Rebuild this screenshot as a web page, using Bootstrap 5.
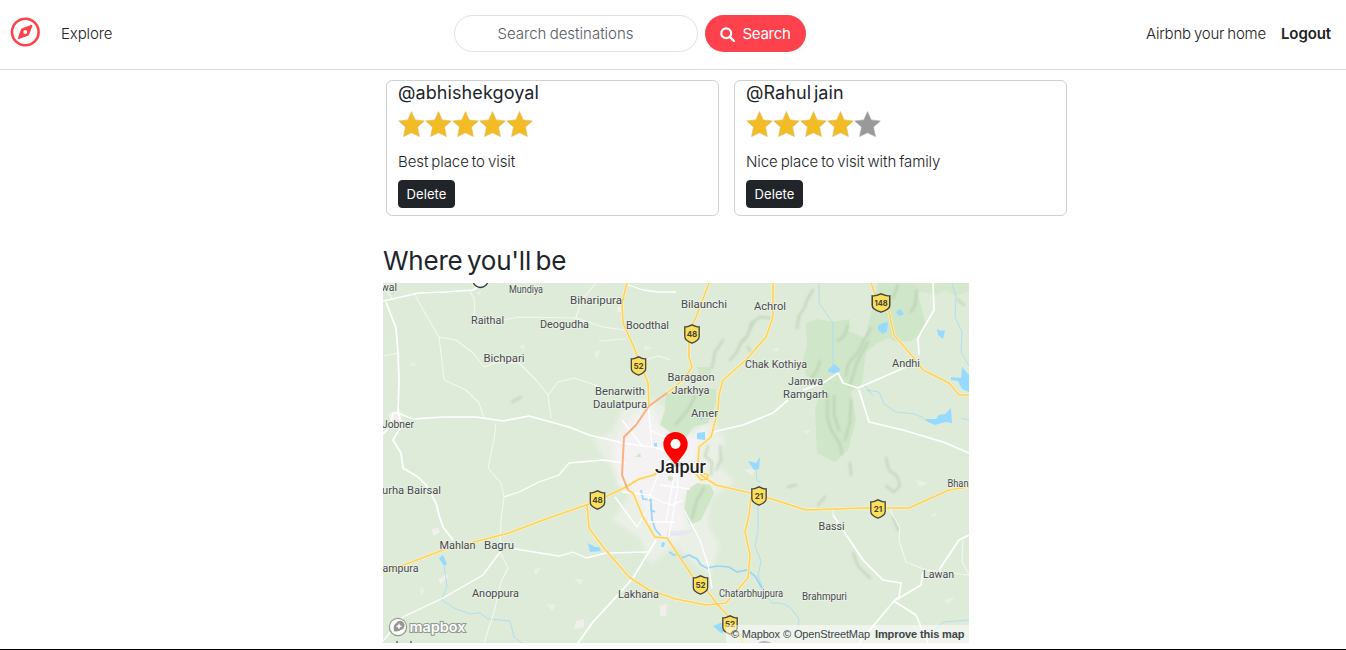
<!DOCTYPE html>
<html lang="en">
<head>
<meta charset="utf-8">
<meta name="viewport" content="width=device-width, initial-scale=1">
<title>Explore</title>
<link href="https://cdn.jsdelivr.net/npm/bootstrap@5.3.0/dist/css/bootstrap.min.css" rel="stylesheet">
<style>
body{font-family:Inter,"Open Sans",sans-serif;font-size:15px;color:#212529;overflow:hidden}
.top-bar{height:70px;border-bottom:1px solid #dcdcdc;padding:0 15px 2px 10px}
.top-bar .nav-link{color:#222;font-weight:300;padding-top:2px}
.side{flex:1 1 0}
.compass{margin-top:-3px}
.explore{margin-left:21px;letter-spacing:-.1px}
.search-field{width:244px;height:37px;border-radius:25px;padding:0 43px;font-size:15px;font-weight:300;letter-spacing:0;word-spacing:-1px}
.search-field::placeholder{color:#555b61}
.search-btn{width:101px;height:37px;border-radius:25px;background:#fe424d;color:#fff;font-size:15px;letter-spacing:-.3px;padding:1px 0 0;margin-left:7px}
.search-wrap{margin-right:82px}
.home-link{letter-spacing:-.2px;word-spacing:-1px}
.top-bar .logout{margin-left:15px;font-weight:600;letter-spacing:-.1px}
.content{width:684px;margin-left:383px}
.reviews{padding:10px 0 0 3px;gap:15px}
.review{width:333px;height:136px;border:1px solid #d0d1d2;border-radius:6px;padding:0 11px}
.review h5{font-size:18px;font-weight:400;line-height:22px;margin:1px 0 7px;letter-spacing:.1px;word-spacing:-2.5px}
.review .stars{height:27px;margin-bottom:14px}
.review p{font-weight:300;line-height:20px;margin:0 0 8px;letter-spacing:-.1px;word-spacing:-1px}
.del{width:57px;height:28px;padding:1px 0 0;font-size:13px;letter-spacing:.1px;border-radius:4px}
.where{font-size:26px;font-weight:400;line-height:32px;margin:29px 0 6px;letter-spacing:-.25px;word-spacing:-2.5px}
.map-box{width:586px;height:360px}
.map-box svg{display:block}
.map-label{font-family:Roboto,sans-serif;font-size:11.8px;fill:#46484c;stroke:#eef4ea;stroke-width:1.5px;paint-order:stroke;text-anchor:middle;font-weight:400}
.map-label .hamlet{font-size:10.5px}
.bottom-line{border-top:1px solid #000;margin-top:6px}
</style>
</head>
<body>
<nav class="top-bar d-flex align-items-center bg-white">
  <div class="side d-flex align-items-center">
    <svg class="compass" width="30" height="30" viewBox="0 0 30 30"><circle cx="15.300" cy="15" r="13.3" fill="none" stroke="#fe424d" stroke-width="2.6"/><path fill="#fe424d" fill-rule="evenodd" d="M20.900 8 12.300 11.200Q11.200 11.600 10.800 12.700L8 20.800Q7.800 22.300 9.300 22L17.800 18.800Q18.800 18.400 19.200 17.300L22.300 9.200Q22.600 7.600 20.900 8ZM15.300 13a2 2 0 1 1 0 4 2 2 0 0 1 0-4Z"/></svg>
    <a class="nav-link explore" href="#">Explore</a>
  </div>
  <form class="search-wrap d-flex">
    <input class="form-control search-field" placeholder="Search destinations" type="search">
    <button class="btn search-btn d-flex align-items-center justify-content-center" type="button"><svg width="15" height="15" viewBox="0 0 15 15" class="me-2"><circle cx="6.2" cy="6.2" r="4.9" fill="none" stroke="#fff" stroke-width="2.2"/><path d="M9.8 9.8 14 14" stroke="#fff" stroke-width="2.4" stroke-linecap="round"/></svg>Search</button>
  </form>
  <div class="side d-flex justify-content-end">
    <a class="nav-link home-link" href="#">Airbnb your home</a>
    <a class="nav-link logout" href="#">Logout</a>
  </div>
</nav>

<svg width="0" height="0" class="position-absolute"><defs>
  <path id="star" d="M13.5.6 17.2 8.9 26.3 9.9 19.5 16 21.4 25.500 13.5 21.8 5.6 25.500 7.5 16 .7 9.9 9.8 8.9Z"/>
  <g id="shield"><path d="M-8.3-7.6Q-6-7-3.5-8.2L0-10 3.5-8.2Q6-7 8.3-7.6V2Q8.3 7 0 10-8.3 7-8.3 2Z" fill="#fff3bd"/><path d="M-7.2-7.2Q-5-6.8-3-7.8L0-9.2 3-7.8Q5-6.8 7.2-7.2V2.500Q7.2 6.500 0 9.200-7.2 6.500-7.2 2.500Z" fill="#fbdf59" stroke="#3f4248" stroke-width="1.3"/></g>
</defs></svg>

<main class="content">
  <div class="reviews d-flex">
    <div class="review">
      <h5>@abhishekgoyal</h5>
      <svg class="stars d-block" width="136" height="27" fill="#f4bc24" stroke="#d9b865" stroke-width=".6"><use href="#star"/><use href="#star" x="27"/><use href="#star" x="54"/><use href="#star" x="81"/><use href="#star" x="108"/></svg>
      <p>Best place to visit</p>
      <button class="btn btn-dark del">Delete</button>
    </div>
    <div class="review">
      <h5>@Rahul jain</h5>
      <svg class="stars d-block" width="136" height="27" fill="#f4bc24" stroke="#d9b865" stroke-width=".6"><use href="#star"/><use href="#star" x="27"/><use href="#star" x="54"/><use href="#star" x="81"/><use href="#star" x="108" fill="#999" stroke="#aaa"/></svg>
      <p>Nice place to visit with family</p>
      <button class="btn btn-dark del">Delete</button>
    </div>
  </div>
  <h3 class="where">Where you'll be</h3>
  <div class="map-box">
  <svg width="586" height="360" viewBox="383 283 586 360">
    <defs><filter id="soft" x="-20%" y="-20%" width="140%" height="140%"><feGaussianBlur stdDeviation="2.5"/></filter><filter id="ridge"><feGaussianBlur stdDeviation=".8"/></filter></defs>
    <rect x="383" y="283" width="586" height="360" fill="#deebd8"/>
    <!-- built-up area -->
    <path filter="url(#soft)" fill="#eaf0e6" d="M624 405 650 397 665 408 668 430 692 432 712 420 725 440 718 465 735 482 710 500 708 525 720 545 710 575 690 560 676 545 650 565 640 538 612 520 630 495 610 465 592 440 612 432Z"/>
    <path filter="url(#soft)" fill="#f4f2f3" d="M632 418 650 404 660 426 680 438 694 436 704 425 708 434 697 450 695 467 706 484 690 490 682 502 688 525 676 540 658 540 645 515 638 498 618 484 612 448Z"/>
    <!-- woodland -->
    <g fill="#cfe6c8">
      <path d="M806 323 817 319 833 322 850 319 848 331 865 338 872 310 878 283 915 283 921 306 925 322 924 333 910 341 897 342 888 338 876 344 866 352 862 383 851 392 856 420 848 450 835 462 817 453 815 409 824 382 806 376 803 360 807 345Z"/>
      <path d="M915 283h54v8l-13 5-12-6-6 5-22-4Z" opacity=".6"/><path d="M697 367h14v10h-11Z"/>
      <path d="M666 393 685 388 716 389 716 403 708 423 693 427 684 441 675 437 665 428 660 425 665 410Z"/>
      <path d="M687 490 697 483 710 485 714 493 706 510 701 520 690 525 684 512Z"/><path d="M635 457l5-4 1 4ZM668 476l6 1-2 4-4-1Z"/>
    </g>
    <path d="M667 531l28-1-10 5-18 1Z" fill="#e6e7f0"/>
    <g fill="#f1efec"><path d="M388 414 400 410 403 424 393 427ZM431 530l7-3 2 5-6 4ZM438 580l8-6 3 2-8 8ZM576 621l8-2 0 8-10 2ZM660 606l7-2-1 12-6 0ZM617 308l4-3 1 7-5 0ZM477 293l4-2-1 4Z"/></g>
    <g fill="#e9f0e4"><path d="M594 352l7-2-5 10ZM574 578l10 2-4 5ZM547 604l9 1-4 6ZM533 570l8-3-5 8ZM412 362l6 3-8 1ZM803 431l8-1-3 4ZM420 587l5 3-4 6ZM744 470l12-2-4 8ZM915 480l13 3-8 4ZM645 345l8 4-9 1ZM930 515l8-3-4 5ZM945 600l10-3-8 8ZM772 350l6-3 1 5ZM519 347l5-3 1 6Z"/></g>
    <!-- hill relief -->
    <g fill="none" stroke="#b4c5a9" opacity=".5" stroke-width="2.6" stroke-linecap="round" filter="url(#ridge)">
      <path d="M813 290 807 300 805 307 799 316 797 328M770 318 760 317 751 323 748 335 741 342 737 352 730 360M754 322 744 341M723 340 715 352 712 368M820 361 817 370 812 378M871 328 864 340 858 352 848 364 846 376M868 342 857 362 850 385M848 325 845 335 838 341M898 285 893 298M917 290 915 305 911 312M958 300l6 5M828 395 827 415 831 430 840 444 842 454M834 396 834 415 839 430M851 400 850 422 845 440M886 458l3 12 8 6 3 10-6 6-8-6M850 463 851 475M853 553 858 566 870 578M893 517 898 530M708 446 705 456 712 462 711 475M720 446 721 460 716 470M704 488 697 500 692 518M695 396 688 410 676 424M512 402l9-5M788 487l8-2M825 497l-7 8M748 347l2 4"/>
    </g>
    <!-- water -->
    <g fill="#96daff">
      <path d="M878 326l5-3 5-1-1 9-4 3-5-4ZM896 312l4-3 4 5-5 2ZM937 329l4 2 4-1-2 9-5-4ZM828 370l6-6 6 5-2 5-10-2ZM951 377l10 1 1-11 7 8v17l-7-3-4-8-7-1ZM924 419l12 0 3-4 6-1 6-6 1 15-7-1-10 3-7-3ZM748 461l8 2 4-6-1 12-5 1ZM697 433l8-1 0 8-8-1ZM439 558l4-3 4 9-3 2ZM588 543l7 4 4 0 2 4-11 1ZM713 626l12-5 4 10-8 2ZM654 443h3v5h-3ZM662 542l3 1-1 4h-3ZM700 417l3 0-2 4Z"/>
    </g>
    <g fill="none" stroke="#abdcf0" stroke-width=".9">
      <path d="M819 283v20l7 10 7 10v45M867 390l12 2 5 12 12 8 18 2 10 4M952 283l4 14-1 20 7 15-1 20 8 14M756 470l1 11 4 1M758 490v42l-3 14 6 15-3 15 8 20 6 7 9 0 9 4 9 12-2 18M444 566l3 20-5 14 12 8 16 6 10-1 8 6 22 2 4 16 8 6M961 418l8 2M865 386l8 10M397 283l-4 12M935 630l8-8 26-2"/>
    </g>
    <path fill="none" stroke="#96d6f8" stroke-width="1.700" d="M641 490l2 9 8 1 0 10 4 2M651 503l1 16 3 10 6 7M669 552l5 3 4-1 4 4 7-3 8 4 4 6 6 3 10-2 12 1 8 5 10-2 8 6 7 12"/>
    <!-- minor roads -->
    <g fill="none" stroke="#f5f7f1" stroke-width="1.1" stroke-linejoin="round">
      <path d="M414 293 426 315 439 337 456 340 473 353 484 367 499 362 519 363 536 380 548 395 551 418M439 337 441 353 444 380 466 390 479 403 484 418M470 291l4 8 1 8-2 12M504 320 519 317 576 318 603 327 624 330M599 341 626 339M576 318l5-17 15-18M548 395l10-13 16-4 24 8M496 423 494 440 488 468 501 483 504 497 501 520 500 552 508 568 501 582 494 612 484 643M383 356l15-3M833 508v7M899 540 906 562 926 570 969 575M890 510l10 18-1 12M963 540l-1 22 7 12M383 285l10 15M645 360l14-4 11 4"/>
    </g>
    <g fill="none" stroke="#fff" stroke-width="1.3" stroke-linejoin="round">
      <path d="M504 497 519 492 539 482 559 475 569 463 603 460 626 463M500 552 483 575 443 598 403 617 383 641M509 548 559 556 573 552 586 558 606 553 649 552M628 285 643 290 659 292 676 292M648 405 650 425 652 447M650 430 674 441M622 420l20 26M650 445l18 8 8 15 2 18-9 50M622 492 650 495 662 502 672 505 683 500M660 485l30 4M615 497l22 30 8-14M684 510 700 540 708 565 712 588M647 522l28 0M685 448l-10 22-9 52M648 500l10-25"/>
    </g>
    <g fill="none" stroke="#fff" stroke-width="1.7" stroke-linejoin="round">
      <path d="M383 301 419 293 446 292 473 290 480 286M386 302 396 328 398 353 399 380 398 413M383 434 390 427 393 413 398 413 402 425 393 440 401 453 403 468 418 477 426 485 436 503 439 515 443 527 453 540M398 413 413 419 443 417 476 417 503 421 529 416 569 427 589 435 623 443 659 448 669 455M656 540 633 578 616 597 593 622 578 643M803 390 823 383 838 373 843 383 858 388 906 367M933 283 934 310 918 338 919 355M713 432 743 425 773 413 788 400M859 390 869 422 903 430 943 442 969 453M833 515 863 560 883 580 901 583 899 597 894 601 859 643M894 601 921 585 923 572M894 601 916 615 928 643M939 570 959 540 969 535"/>
    </g>
    <!-- highways -->
    <g fill="none" stroke="#fff3ba" stroke-width="3" stroke-linejoin="round">
      <path id="hwp" d="M627 283 622 303 623 323 633 345 639 360 648 383 649 405M628 490 633 493 643 517 655 537 667 538 693 577 708 592 718 605 729 617 743 643M667 393 683 380 692 367 689 357 689 333 696 317 709 283M773 283 773 317 766 337 746 360 723 380 719 395 718 410 711 437 699 447 698 463 701 475 716 485 759 495 806 510 863 508 909 508 949 490 969 487M696 474l5 6 6-1 1-4-8-3M871 283 876 297 889 312 894 335 913 357 923 370 949 383 959 395 969 395M383 573 443 550 509 533 546 519 586 505 603 498 626 487 639 479 654 475 663 468M587 505 589 528 603 547 629 577 649 590 676 599 706 605 726 603 748 578 750 555 745 532 749 515 751 497"/>
    </g>
    <use href="#hwp" fill="none" stroke="#fad165" stroke-width="1.6" stroke-linejoin="round"/>
    <path d="M667 393 649 406 636 425 624 437 622 475 628 490" fill="none" stroke="#fcb07f" stroke-width="2" stroke-linejoin="round"/>
    <!-- road shields -->
    <circle cx="480.500" cy="280" r="7.500" fill="#fff" stroke="#33363b" stroke-width="1.3"/>
    <use href="#shield" x="638.500" y="366"/><use href="#shield" x="692" y="334"/><use href="#shield" transform="translate(881 303) scale(1.22 1)"/><use href="#shield" x="597.500" y="500"/><use href="#shield" x="759" y="496"/><use href="#shield" x="878" y="509"/><use href="#shield" x="700.500" y="585"/><use href="#shield" x="730" y="625"/>
    <path d="M758 643q6-4 14 0Z" fill="#777"/>
    <g font-family="Inter,sans-serif" font-size="8" font-weight="700" fill="#45443a" text-anchor="middle">
      <text x="638.500" y="369">52</text><text x="692" y="337">48</text><text x="881" y="306" font-size="7.500">148</text><text x="597.500" y="503">48</text><text x="759" y="499">21</text><text x="878" y="512">21</text><text x="700.500" y="588">52</text><text x="730" y="627">52</text>
    </g>
    <!-- places -->
    <g class="map-label">
      <text x="389" y="290.500" textLength="16" lengthAdjust="spacingAndGlyphs">wal</text>
      <text class="hamlet" x="526" y="293" textLength="34" lengthAdjust="spacingAndGlyphs">Mundiya</text>
      <text x="596" y="303.500" textLength="52" lengthAdjust="spacingAndGlyphs">Biharipura</text>
      <text x="487.500" y="323.500" textLength="33" lengthAdjust="spacingAndGlyphs">Raithal</text>
      <text x="564.500" y="327.500" textLength="49" lengthAdjust="spacingAndGlyphs">Deogudha</text>
      <text x="647.500" y="329" textLength="43" lengthAdjust="spacingAndGlyphs">Boodthal</text>
      <text x="504" y="362" textLength="41" lengthAdjust="spacingAndGlyphs">Bichpari</text>
      <text x="704" y="308" textLength="46" lengthAdjust="spacingAndGlyphs">Bilaunchi</text>
      <text x="770" y="310" textLength="32" lengthAdjust="spacingAndGlyphs">Achrol</text>
      <text x="776" y="367.500" textLength="62" lengthAdjust="spacingAndGlyphs">Chak Kothiya</text>
      <text x="805.500" y="385" textLength="35" lengthAdjust="spacingAndGlyphs">Jamwa</text>
      <text x="805.500" y="398" textLength="45" lengthAdjust="spacingAndGlyphs">Ramgarh</text>
      <text x="906" y="367" textLength="28" lengthAdjust="spacingAndGlyphs">Andhi</text>
      <text x="691" y="381" textLength="47" lengthAdjust="spacingAndGlyphs">Baragaon</text>
      <text x="690.500" y="394" textLength="38" lengthAdjust="spacingAndGlyphs">Jarkhya</text>
      <text x="620" y="395" textLength="50" lengthAdjust="spacingAndGlyphs">Benarwith</text>
      <text x="620" y="407.500" textLength="54" lengthAdjust="spacingAndGlyphs">Daulatpura</text>
      <text x="704.500" y="416.500" textLength="27" lengthAdjust="spacingAndGlyphs">Amer</text>
      <text x="398" y="428" textLength="32" lengthAdjust="spacingAndGlyphs">Jobner</text>
      <text x="411.500" y="493.500" textLength="59" lengthAdjust="spacingAndGlyphs">urha Bairsal</text>
      <text x="958" y="486.500" textLength="21" lengthAdjust="spacingAndGlyphs">Bhan</text>
      <text x="831.500" y="529.500" textLength="26" lengthAdjust="spacingAndGlyphs">Bassi</text>
      <text x="457.500" y="549" textLength="36" lengthAdjust="spacingAndGlyphs">Mahlan</text>
      <text x="499" y="549" textLength="30" lengthAdjust="spacingAndGlyphs">Bagru</text>
      <text x="400.500" y="571.500" textLength="36" lengthAdjust="spacingAndGlyphs">ampura</text>
      <text x="495.500" y="596.500" textLength="47" lengthAdjust="spacingAndGlyphs">Anoppura</text>
      <text x="638.500" y="598" textLength="41" lengthAdjust="spacingAndGlyphs">Lakhana</text>
      <text class="hamlet" x="751" y="596.500" textLength="64" lengthAdjust="spacingAndGlyphs">Chatarbhujpura</text>
      <text class="hamlet" x="824.500" y="599.500" textLength="45" lengthAdjust="spacingAndGlyphs">Brahmpuri</text>
      <text x="938.500" y="577.500" textLength="31" lengthAdjust="spacingAndGlyphs">Lawan</text>
    </g>
    <path d="M397 641v2M411 641v2" stroke="#45484b" stroke-width="1.2"/>
    <text x="655" y="472.500" font-family="Roboto,sans-serif" font-weight="500" font-size="17.500" fill="#222" stroke="#fff" stroke-width="2" paint-order="stroke" textLength="51" lengthAdjust="spacingAndGlyphs">Jaipur</text>
    <!-- marker -->
    <ellipse cx="676" cy="464" rx="7" ry="3" fill="#000" opacity=".12"/>
    <path fill="#f00" d="M675.500 432a12.200 12.200 0 0 1 12.200 12.200C687.700 452 679.500 459 675.500 464.500 671.500 459 663.300 452 663.300 444.200A12.200 12.200 0 0 1 675.500 432Z"/><circle cx="675.500" cy="444" r="5" fill="#fff"/>
    <!-- map logo and attribution -->
    <circle cx="398" cy="627" r="9.200" fill="#93998f"/><circle cx="398" cy="627" r="8" fill="#fff"/>
    <path d="M394 631.300Q392.700 625 396 623.200A4.600 4.600 0 1 1 401.500 629.800Q398 632.300 394 631.300Z" fill="#93998f"/><path d="M399 623l1 2.200 2.200 1-2.200 1-1 2.200-1-2.200-2.200-1 2.200-1Z" fill="#fff"/>
    <text x="409.500" y="631.500" font-family="Inter,sans-serif" font-size="13.500" font-weight="600" fill="#fff" stroke="#929990" stroke-width="2" paint-order="stroke" textLength="56" lengthAdjust="spacingAndGlyphs">mapbox</text>
    <rect x="726" y="625" width="243" height="18" fill="#fff" opacity=".5"/>
    <g font-family="Liberation Sans,sans-serif" font-size="11" fill="#404448"><text x="731" y="638" textLength="49">© Mapbox</text><text x="783" y="638" textLength="87">© OpenStreetMap</text><text x="875" y="638" font-weight="700" textLength="89.500">Improve this map</text></g>
  </svg>
  </div>
</main>
<div class="bottom-line"></div>
<script src="https://cdn.jsdelivr.net/npm/bootstrap@5.3.0/dist/js/bootstrap.bundle.min.js"></script>
</body>
</html>
